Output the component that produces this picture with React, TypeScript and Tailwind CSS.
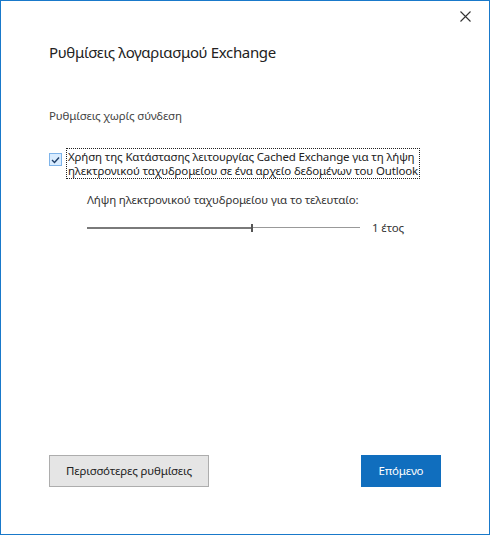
import { useState } from "react";

const font = { fontFamily: '"Segoe UI", "Noto Sans", sans-serif' };

export default function App() {
    const [cached, setCached] = useState(true);

    return (
        <div className="w-[490px] h-[535px] bg-white border border-[#1979ca] relative text-[#1f1f1f]" style={font}>
            {/* close button */}
            <button className="absolute right-[18px] top-[10px] w-[11px] h-[11px] flex items-center justify-center">
                <svg width="11" height="11" viewBox="0 0 11 11">
                    <path d="M0.5 0.5 L10.5 10.5 M10.5 0.5 L0.5 10.5" stroke="#333" strokeWidth="1.1" />
                </svg>
            </button>

            <div className="pl-[48px] pr-[48px] pt-[40px] flex flex-col h-full">
                <h1 className="text-[15px] leading-[22px] tracking-[-0.35px] text-[#222]">Ρυθμίσεις λογαριασμού Exchange</h1>

                <div className="mt-[45px] text-[11.5px] leading-[16px] tracking-[-0.15px] text-[#444]">Ρυθμίσεις χωρίς σύνδεση</div>

                <label className="mt-[24px] flex items-start gap-[4px] cursor-pointer">
                    <span
                        onClick={() => setCached(!cached)}
                        className="mt-[5px] w-[13px] h-[13px] shrink-0 border border-[#7eb4ea] bg-[#d9ecff] flex items-center justify-center"
                    >
                        {cached && (
                            <svg width="9" height="8" viewBox="0 0 9 8">
                                <path d="M1 4 L3.5 6.5 L8 1.5" stroke="#1f3d66" strokeWidth="1.4" fill="none" />
                            </svg>
                        )}
                    </span>
                    <span className="border border-dotted border-[#222] px-[1px] pt-[1px] pb-[1px] text-[11.5px] leading-[13.5px] tracking-[-0.15px] text-[#222]">
                        Χρήση της Κατάστασης λειτουργίας Cached Exchange για τη λήψη
                        <br />
                        ηλεκτρονικού ταχυδρομείου σε ένα αρχείο δεδομένων του Outlook
                    </span>
                </label>

                <div className="pl-[38px] mt-[13px] text-[11.5px] leading-[16px] tracking-[-0.15px] text-[#333]">
                    Λήψη ηλεκτρονικού ταχυδρομείου για το τελευταίο:
                </div>

                {/* period slider */}
                <div className="pl-[38px] mt-[11px] flex items-center">
                    <div className="w-[273px] h-[8px] flex items-center">
                        <div className="w-[164px] h-[2px] bg-[#7a7a7a]" />
                        <div className="w-[2px] h-[8px] bg-[#555]" />
                        <div className="flex-1 h-[1px] bg-[#999]" />
                    </div>
                    <span className="ml-[12px] text-[11.5px] tracking-[-0.15px] text-[#333]">1 έτος</span>
                </div>

                <div className="mt-auto mb-[47px] flex justify-between">
                    <button className="w-[160px] h-[32px] bg-[#e5e5e5] border border-[#adadad] text-[11.5px] tracking-[-0.15px] text-[#222]">
                        Περισσότερες ρυθμίσεις
                    </button>
                    <button className="w-[80px] h-[32px] bg-[#106ebe] text-white text-[11.5px] tracking-[-0.15px]">Επόμενο</button>
                </div>
            </div>
        </div>
    );
}
